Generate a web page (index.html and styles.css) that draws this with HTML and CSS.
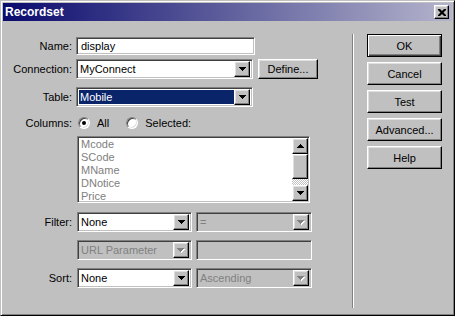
FILE: index.html
```html
<!DOCTYPE html>
<html lang="en">
<head>
    <meta charset="UTF-8">
    <title>Recordset</title>
    <link rel="stylesheet" href="styles.css">
</head>
<body>
    <div class="window">
        <div class="titlebar">
            <span class="title">Recordset</span>
            <span class="close-btn raised">
                <svg width="8" height="7" viewBox="0 0 8 7"><path d="M0 0h2l2 2 2-2h2v1L5.5 3.5 8 6v1H6L4 5 2 7H0V6l2.5-2.5L0 1z"/></svg>
            </span>
        </div>
        <div class="dialog-body">
            <div class="form">
                <div class="row row-name">
                    <span class="label">Name:</span>
                    <div class="field sunken name-field">display</div>
                </div>
                <div class="row row-conn">
                    <span class="label">Connection:</span>
                    <div class="field sunken select wide-select">
                        <span class="value">MyConnect</span>
                        <span class="drop raised"><svg width="7" height="4" viewBox="0 0 7 4"><path d="M0 0h7v1H0zM1 1h5v1H1zM2 2h3v1H2zM3 3h1v1H3z"/></svg></span>
                    </div>
                    <div class="btn raised define-btn">Define...</div>
                </div>
                <div class="row row-table">
                    <span class="label">Table:</span>
                    <div class="field sunken select wide-select">
                        <span class="value selected">Mobile</span>
                        <span class="drop raised"><svg width="7" height="4" viewBox="0 0 7 4"><path d="M0 0h7v1H0zM1 1h5v1H1zM2 2h3v1H2zM3 3h1v1H3z"/></svg></span>
                    </div>
                </div>
                <div class="row row-columns">
                    <span class="label">Columns:</span>
                    <span class="radio radio-all checked"></span>
                    <span class="radio-text">All</span>
                    <span class="radio"></span>
                    <span class="radio-text">Selected:</span>
                </div>
                <div class="row row-list indent">
                    <span class="label"></span>
                    <div class="listbox sunken">
                        <ul class="items">
                            <li>Mcode</li>
                            <li>SCode</li>
                            <li>MName</li>
                            <li>DNotice</li>
                            <li>Price</li>
                        </ul>
                        <div class="scrollbar">
                            <span class="scroll-btn raised"><svg width="7" height="4" viewBox="0 0 7 4"><path d="M3 0h1v1H3zM2 1h3v1H2zM1 2h5v1H1zM0 3h7v1H0z"/></svg></span>
                            <span class="thumb raised"></span>
                            <span class="track"></span>
                            <span class="scroll-btn raised"><svg width="7" height="4" viewBox="0 0 7 4"><path d="M0 0h7v1H0zM1 1h5v1H1zM2 2h3v1H2zM3 3h1v1H3z"/></svg></span>
                        </div>
                    </div>
                </div>
                <div class="row row-filter indent">
                    <span class="label">Filter:</span>
                    <div class="field sunken select small-select">
                        <span class="value">None</span>
                        <span class="drop raised"><svg width="7" height="4" viewBox="0 0 7 4"><path d="M0 0h7v1H0zM1 1h5v1H1zM2 2h3v1H2zM3 3h1v1H3z"/></svg></span>
                    </div>
                    <div class="field sunken select small-select disabled">
                        <span class="value">=</span>
                        <span class="drop raised"><svg width="8" height="5" viewBox="0 0 8 5"><path class="hl" d="M1 1h7v1H1zM2 2h5v1H2zM3 3h3v1H3zM4 4h1v1H4z"/><path d="M0 0h7v1H0zM1 1h5v1H1zM2 2h3v1H2zM3 3h1v1H3z"/></svg></span>
                    </div>
                </div>
                <div class="row row-param indent">
                    <span class="label"></span>
                    <div class="field sunken select small-select disabled">
                        <span class="value">URL Parameter</span>
                        <span class="drop raised"><svg width="8" height="5" viewBox="0 0 8 5"><path class="hl" d="M1 1h7v1H1zM2 2h5v1H2zM3 3h3v1H3zM4 4h1v1H4z"/><path d="M0 0h7v1H0zM1 1h5v1H1zM2 2h3v1H2zM3 3h1v1H3z"/></svg></span>
                    </div>
                    <div class="field sunken small-select disabled"></div>
                </div>
                <div class="row row-sort indent">
                    <span class="label">Sort:</span>
                    <div class="field sunken select small-select">
                        <span class="value">None</span>
                        <span class="drop raised"><svg width="7" height="4" viewBox="0 0 7 4"><path d="M0 0h7v1H0zM1 1h5v1H1zM2 2h3v1H2zM3 3h1v1H3z"/></svg></span>
                    </div>
                    <div class="field sunken select small-select disabled">
                        <span class="value">Ascending</span>
                        <span class="drop raised"><svg width="8" height="5" viewBox="0 0 8 5"><path class="hl" d="M1 1h7v1H1zM2 2h5v1H2zM3 3h3v1H3zM4 4h1v1H4z"/><path d="M0 0h7v1H0zM1 1h5v1H1zM2 2h3v1H2zM3 3h1v1H3z"/></svg></span>
                    </div>
                </div>
            </div>
            <div class="separator"></div>
            <div class="buttons">
                <div class="btn btn-default">OK</div>
                <div class="btn raised">Cancel</div>
                <div class="btn raised">Test</div>
                <div class="btn raised">Advanced...</div>
                <div class="btn raised">Help</div>
            </div>
        </div>
    </div>
</body>
</html>
```

FILE: styles.css
```css
body {
    margin: 0;
    font-family: 'Liberation Sans', Arial, sans-serif;
    font-size: 11px;
    color: #000;
    background-color: #c0c0c0;
}

.window {
    width: 455px;
    height: 316px;
    box-sizing: border-box;
    padding: 2px;
    border: 1px solid;
    border-color: #c0c0c0 #000 #000 #c0c0c0;
    box-shadow: inset 1px 1px 0 #fff, inset -1px -1px 0 #808080;
    display: flex;
    flex-direction: column;
}

/* bevels */
.raised {
    box-sizing: border-box;
    background-color: #c0c0c0;
    border: 1px solid;
    border-color: #fff #000 #000 #fff;
    box-shadow: inset -1px -1px 0 #808080, inset 1px 1px 0 #dfdfdf;
}

.sunken {
    box-sizing: border-box;
    background-color: #fff;
    border: 1px solid;
    border-color: #808080 #fff #fff #808080;
    box-shadow: inset 1px 1px 0 #404040, inset -1px -1px 0 #c0c0c0;
}

.titlebar {
    height: 18px;
    flex: none;
    display: flex;
    align-items: center;
    justify-content: space-between;
    padding-left: 2px;
    background: linear-gradient(to right, #0a0a6e, #b4b4cc);
}

.title {
    color: #fff;
    font-weight: bold;
    font-size: 12px;
}

.close-btn {
    width: 15px;
    height: 14px;
    margin-right: 3px;
    display: flex;
    align-items: center;
    justify-content: center;
}

.dialog-body {
    flex: 1;
    display: flex;
    padding: 13px 0 5px;
}

.form {
    width: 349px;
    flex: none;
    padding-top: 3px;
    box-sizing: border-box;
}

.row {
    display: flex;
    align-items: center;
}

.label {
    width: 69px;
    flex: none;
    margin-right: 4px;
    text-align: right;
}

.indent .label {
    margin-right: 5px;
}

.row-conn { margin-top: 4px; }
.row-table { margin-top: 8px; }
.row-columns { margin-top: 8px; height: 16px; }
.row-list { margin-top: 5px; }
.row-filter { margin-top: 9px; }
.row-param { margin-top: 8px; }
.row-sort { margin-top: 8px; }

.field {
    height: 20px;
    display: flex;
    align-items: center;
    white-space: nowrap;
    overflow: hidden;
}

.name-field {
    width: 179px;
    height: 18px;
    padding-left: 4px;
}

.select {
    padding: 2px;
}

.select .value {
    flex: 1;
    height: 100%;
    display: flex;
    align-items: center;
    padding-left: 1px;
}

.select .value.selected {
    background-color: #0a246a;
    color: #fff;
}

.drop {
    width: 16px;
    height: 16px;
    flex: none;
    display: flex;
    align-items: center;
    justify-content: center;
}

.wide-select { width: 177px; }
.small-select { width: 115px; }
.small-select + .small-select { margin-left: 4px; width: 116px; }

.disabled {
    background-color: #c0c0c0;
    color: #808080;
}

.disabled .drop path { fill: #808080; }
.disabled .drop path.hl { fill: #fff; }

/* radios */
.radio {
    width: 12px;
    height: 12px;
    box-sizing: border-box;
    border-radius: 50%;
    background-color: #fff;
    border: 1px solid;
    border-color: #808080 #fff #fff #808080;
    box-shadow: inset 1px 1px 0 #404040, inset -1px -1px 0 #dfdfdf;
    position: relative;
    flex: none;
}

.radio.checked::after {
    content: '';
    position: absolute;
    left: 3px;
    top: 3px;
    width: 4px;
    height: 4px;
    border-radius: 50%;
    background-color: #000;
}

.radio-all { margin-left: 2px; }
.radio-text { margin-left: 7px; margin-right: 17px; }

/* list */
.listbox {
    width: 233px;
    height: 67px;
    display: flex;
    padding: 1px;
}

.items {
    list-style: none;
    margin: 0;
    padding: 0 0 0 2px;
    flex: 1;
    color: #808080;
    overflow: hidden;
}

.items li {
    height: 13px;
    line-height: 13px;
}

.scrollbar {
    width: 16px;
    display: flex;
    flex-direction: column;
}

.scroll-btn {
    height: 16px;
    display: flex;
    align-items: center;
    justify-content: center;
}

.thumb { height: 25px; }

.track {
    flex: 1;
    background: repeating-conic-gradient(#fff 0 25%, #c0c0c0 0 50%) 0 0 / 2px 2px;
}

/* right side */
.separator {
    width: 0;
    border-left: 1px solid #808080;
    border-right: 1px solid #fff;
}

.buttons {
    margin-left: 13px;
    display: flex;
    flex-direction: column;
    gap: 5px;
}

.btn {
    width: 75px;
    height: 23px;
    display: flex;
    align-items: center;
    justify-content: center;
    box-sizing: border-box;
}

.btn.define-btn {
    width: 60px;
    height: 20px;
    margin-left: 5px;
}

.btn-default {
    background-color: #c0c0c0;
    border: 1px solid #000;
    box-shadow: inset 1px 1px 0 #fff, inset -1px -1px 0 #404040, inset -2px -2px 0 #808080;
}
```
